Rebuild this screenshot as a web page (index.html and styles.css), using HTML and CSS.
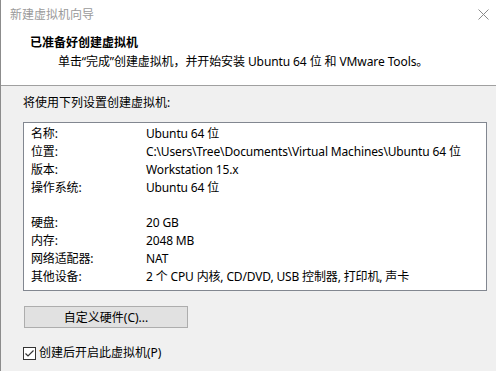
FILE: index.html
```html
<!DOCTYPE html>
<html lang="zh-CN">
<head>
    <meta charset="UTF-8">
    <title>新建虚拟机向导</title>
    <link rel="stylesheet" href="styles.css">
</head>
<body>
<div class="window">
    <!-- Header -->
    <div class="header">
        <div class="titlebar">
            <span>新建虚拟机向导</span>
            <svg class="close" width="11" height="11" viewBox="0 0 11 11">
                <path d="M0.5 0.5 L10.5 10.5 M10.5 0.5 L0.5 10.5" stroke="#8a8a8a" stroke-width="1" fill="none"/>
            </svg>
        </div>
        <h1>已准备好创建虚拟机</h1>
        <p class="subtitle">单击“完成”创建虚拟机，并开始安装 Ubuntu 64 位 和 VMware Tools。</p>
    </div>

    <div class="content">
        <p class="intro">将使用下列设置创建虚拟机:</p>

        <div class="summary">
            <div class="row"><span class="label">名称:</span><span>Ubuntu 64 位</span></div>
            <div class="row"><span class="label">位置:</span><span>C:\Users\Tree\Documents\Virtual Machines\Ubuntu 64 位</span></div>
            <div class="row"><span class="label">版本:</span><span>Workstation 15.x</span></div>
            <div class="row"><span class="label">操作系统:</span><span>Ubuntu 64 位</span></div>
            <div class="row"></div>
            <div class="row"><span class="label">硬盘:</span><span>20 GB</span></div>
            <div class="row"><span class="label">内存:</span><span>2048 MB</span></div>
            <div class="row"><span class="label">网络适配器:</span><span>NAT</span></div>
            <div class="row"><span class="label">其他设备:</span><span>2 个 CPU 内核, CD/DVD, USB 控制器, 打印机, 声卡</span></div>
        </div>

        <button class="btn">自定义硬件(C)...</button>

        <label class="check">
            <span class="box">
                <svg width="11" height="11" viewBox="0 0 11 11">
                    <path d="M1.5 5.5 L4 8 L9.5 2.5" stroke="#333" stroke-width="1.2" fill="none"/>
                </svg>
            </span>
            创建后开启此虚拟机(P)
        </label>
    </div>
</div>
</body>
</html>
```

FILE: styles.css
```css
body {
    margin: 0;
    padding: 0;
    background-color: #f0f0f0;
    font-family: "Noto Sans", "Noto Sans CJK SC", sans-serif;
    font-size: 12px;
    color: #000;
}

.window {
    height: 371px;
    border-left: 1px solid #8c8c8c;
    box-sizing: border-box;
    overflow: hidden;
}

/* Header */
.header {
    background-color: #fff;
    height: 85px;
    border-bottom: 1px solid #a0a0a0;
}

.titlebar {
    height: 28px;
    padding: 0 7px 0 9px;
    display: flex;
    align-items: center;
    justify-content: space-between;
    color: #9a9a9a;
}

.header h1 {
    margin: 0;
    padding: 6px 0 0 29px;
    font-size: 12px;
    font-weight: bold;
    line-height: 18px;
}

.subtitle {
    margin: 0;
    padding-left: 57px;
    line-height: 20px;
    letter-spacing: -0.1px;
}

/* Content */
.content {
    padding: 8px 0 0 22px;
}

.intro {
    margin: 0;
    line-height: 18px;
}

.summary {
    margin-top: 10px;
    width: 462px;
    height: 165px;
    padding-top: 2px;
    background-color: #fff;
    border: 1px solid #828790;
}

.row {
    display: flex;
    height: 17.875px;
    line-height: 18px;
    padding-left: 7px;
    white-space: nowrap;
    letter-spacing: -0.15px;
}

.label {
    width: 115px;
}

.btn {
    display: block;
    margin: 15px 0 0 1px;
    width: 164px;
    height: 22px;
    padding: 0;
    background-color: #e1e1e1;
    border: 1px solid #adadad;
    font-family: inherit;
    font-size: 12px;
    color: #000;
}

.check {
    display: flex;
    align-items: center;
    gap: 3px;
    margin-top: 18px;
    line-height: 14px;
}

.check .box {
    width: 11px;
    height: 11px;
    border: 1px solid #333;
    background-color: #fff;
    display: flex;
}
```
